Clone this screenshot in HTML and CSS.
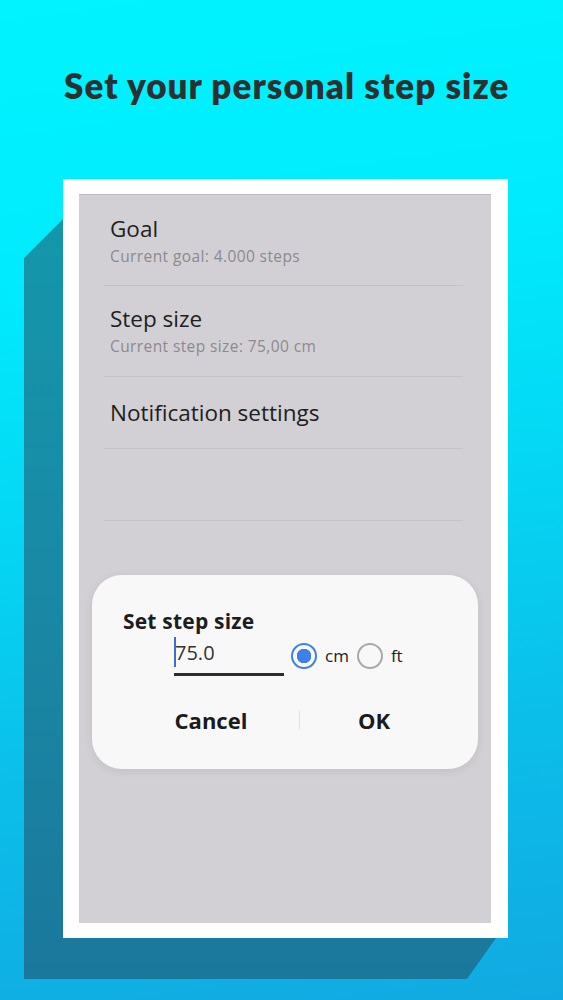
FILE: index.html
```html
<!DOCTYPE html>
<html lang="en">
<head>
<meta charset="utf-8">
<title>Set your personal step size</title>
<link rel="stylesheet" href="styles.css">
</head>
<body>
<div class="page">
  <h1 class="headline">Set your personal step size</h1>
  <div class="device">
    <div class="screen">
      <div class="pref pref-goal">
        <div class="pref-title">Goal</div>
        <div class="pref-sub">Current goal: 4.000 steps</div>
      </div>
      <div class="pref pref-step">
        <div class="pref-title">Step size</div>
        <div class="pref-sub">Current step size: 75,00 cm</div>
      </div>
      <div class="pref pref-notif">
        <div class="pref-title">Notification settings</div>
      </div>
      <div class="pref pref-empty"></div>

      <div class="dialog">
        <div class="dialog-title">Set step size</div>
        <div class="dialog-row">
          <div class="field"><span class="caret"></span>75.0</div>
          <span class="radio radio-on"></span>
          <span class="radio-label">cm</span>
          <span class="radio radio-off"></span>
          <span class="radio-label">ft</span>
        </div>
        <div class="dialog-actions">
          <div class="btn btn-cancel">Cancel</div>
          <div class="btn-sep"></div>
          <div class="btn btn-ok">OK</div>
        </div>
      </div>
    </div>
  </div>
</div>
</body>
</html>
```

FILE: styles.css
```css
html, body {
  margin: 0;
  padding: 0;
}

body {
  width: 563px;
  height: 1000px;
  overflow: hidden;
  background: linear-gradient(172deg, #00f3ff 0%, #00ecfe 25%, #05d6f3 50%, #0bbfea 72%, #11a9e1 100%);
}

.page {
  display: flex;
  flex-direction: column;
  padding-top: 64px;
}

.headline {
  margin: 0 0 73px 64px;
  font-family: "Lato", "Liberation Sans", sans-serif;
  font-weight: 800;
  font-size: 35px;
  line-height: 42px;
  color: #2b3031;
  letter-spacing: 1.05px;
  white-space: nowrap;
}

.device {
  position: relative;
  margin-left: 63px;
  width: 445px;
  height: 759px;
  box-sizing: border-box;
  padding: 15px 17px 15px 16px;
  background: #ffffff;
}

.device::before {
  content: "";
  position: absolute;
  left: -39px;
  top: 39px;
  width: 472px;
  height: 761px;
  z-index: -1;
  background: linear-gradient(180deg, #1497aa 0%, #198aa6 45%, #1a789c 100%);
  clip-path: polygon(0 40px, 40px 0, 472px 0, 472px 720px, 443px 761px, 0 761px);
}

.screen {
  position: relative;
  height: 100%;
  background: #d2d0d4;
  border-top: 1px solid #bdbbc0;
  box-sizing: border-box;
  font-family: "Open Sans", "Roboto", sans-serif;
}

.pref {
  box-sizing: border-box;
  margin: 0 28px 0 25px;
  padding-left: 6px;
  border-bottom: 1px solid #c5c3c7;
}

.pref-goal {
  height: 91px;
  padding-top: 22px;
}

.pref-step {
  height: 91px;
  padding-top: 21.3px;
}

.pref-notif {
  height: 72px;
  padding-top: 24px;
}

.pref-empty {
  height: 72px;
}

.pref-title {
  font-size: 22.5px;
  line-height: 24px;
  color: #1e1e20;
}

.pref-sub {
  margin-top: 4.5px;
  font-size: 15.5px;
  line-height: 20px;
  letter-spacing: 0.4px;
  color: #8c8a8f;
}

.dialog {
  position: absolute;
  left: 13px;
  top: 380px;
  width: 386px;
  height: 194px;
  box-sizing: border-box;
  padding: 33px 0 0 31px;
  background: #f8f8f9;
  border-radius: 30px;
  box-shadow: 0 2px 10px rgba(0, 0, 0, 0.08);
}

.dialog-title {
  font-weight: 700;
  font-size: 21px;
  line-height: 26px;
  letter-spacing: 0.2px;
  color: #1d1d1f;
}

.dialog-row {
  display: flex;
  align-items: flex-start;
  margin-top: 5px;
  padding-left: 51px;
}

.field {
  position: relative;
  width: 110px;
  box-sizing: border-box;
  padding: 0 0 5.5px 1px;
  font-size: 20px;
  line-height: 28px;
  color: #333336;
  border-bottom: 3px solid #2c2c2e;
}

.caret {
  position: absolute;
  left: 0;
  top: -2px;
  width: 2px;
  height: 30px;
  background: #3c6fd6;
}

.radio {
  box-sizing: border-box;
  width: 26px;
  height: 26px;
  margin-top: 4px;
  border-radius: 50%;
}

.radio-on {
  margin-left: 7px;
  border: 2.5px solid #3d80e8;
  background: radial-gradient(circle, #3d80e8 0 7px, #f8f8f9 7.5px);
}

.radio-off {
  margin-left: 8px;
  border: 2px solid #a9a9ab;
}

.radio-label {
  margin-top: 4px;
  margin-left: 8px;
  font-size: 17px;
  line-height: 26px;
  color: #222224;
}

.dialog-actions {
  display: flex;
  align-items: center;
  margin-top: 29px;
}

.btn {
  font-weight: 700;
  font-size: 22px;
  line-height: 30px;
  color: #1b1b1d;
  text-align: center;
}

.btn-cancel {
  width: 176px;
}

.btn-ok {
  width: 148px;
}

.btn-sep {
  width: 1px;
  height: 20px;
  background: #e3e3e5;
}
```
